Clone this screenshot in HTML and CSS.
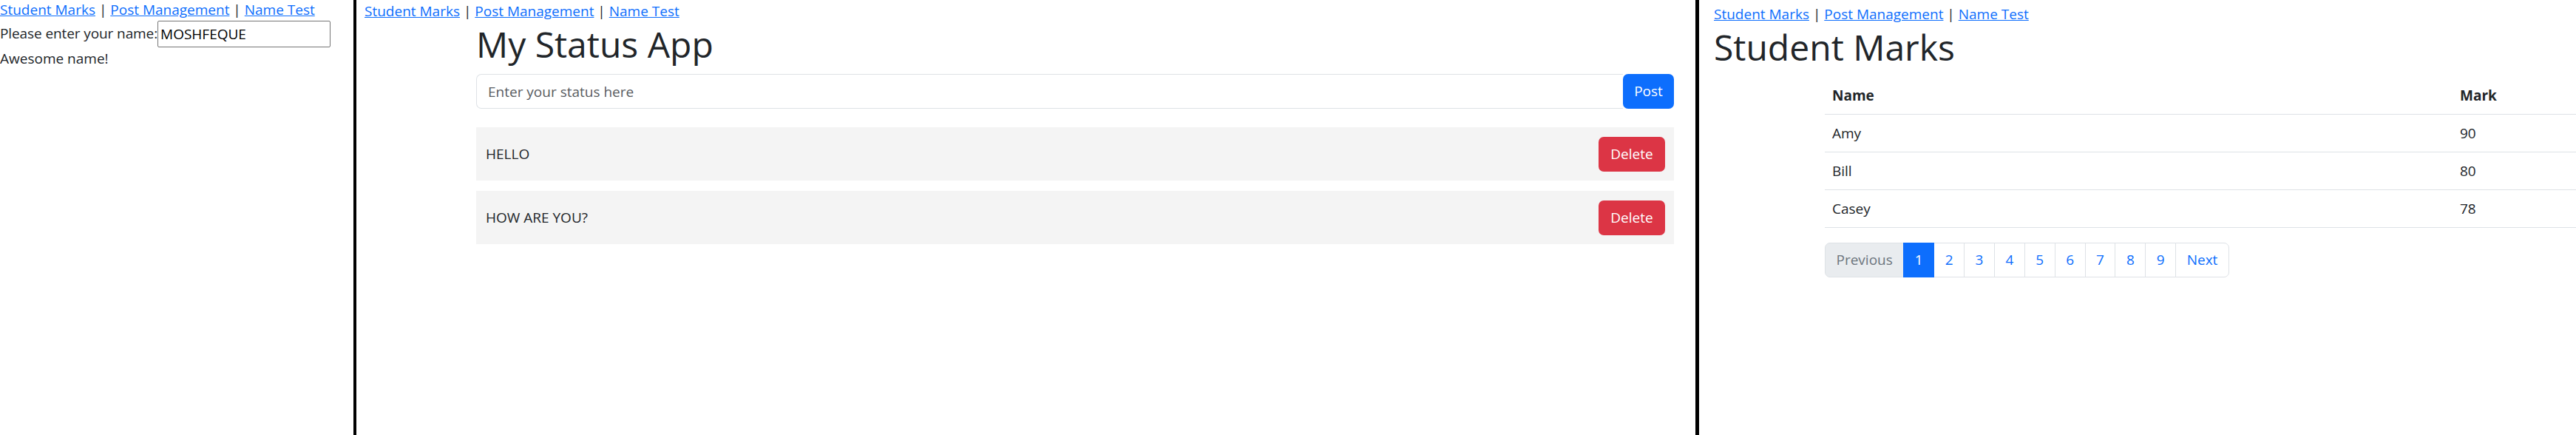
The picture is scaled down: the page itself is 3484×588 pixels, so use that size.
FILE: index.html
```html
<!DOCTYPE html>
<html lang="en">
<head>
<meta charset="utf-8">
<title>Apps</title>
<link rel="stylesheet" href="styles.css">
</head>
<body>
<div class="screen">
  <section class="panel panel-name">
    <div class="nav-line"><a href="#">Student Marks</a> | <a href="#">Post Management</a> | <a href="#">Name Test</a></div>
    <div class="name-row"><span>Please enter your name:</span><input class="name-input" type="text" value="MOSHFEQUE"></div>
    <div class="name-msg">Awesome name!</div>
  </section>
  <div class="divider divider-one"></div>
  <section class="panel panel-posts">
    <div class="nav-line nav-posts"><a href="#">Student Marks</a> | <a href="#">Post Management</a> | <a href="#">Name Test</a></div>
    <div class="container">
      <h1 class="title">My Status App</h1>
      <div class="input-group">
        <input class="status-input" type="text" placeholder="Enter your status here">
        <button class="btn btn-primary">Post</button>
      </div>
      <div class="post-list">
        <div class="post-item"><span>HELLO</span><button class="btn btn-danger">Delete</button></div>
        <div class="post-item"><span>HOW ARE YOU?</span><button class="btn btn-danger">Delete</button></div>
      </div>
    </div>
  </section>
  <div class="divider divider-two"></div>
  <section class="panel panel-marks">
    <div class="nav-line"><a href="#">Student Marks</a> | <a href="#">Post Management</a> | <a href="#">Name Test</a></div>
    <h1 class="title">Student Marks</h1>
    <div class="marks-body">
      <table class="marks-table">
        <thead>
          <tr><th class="col-name">Name</th><th>Mark</th></tr>
        </thead>
        <tbody>
          <tr><td>Amy</td><td>90</td></tr>
          <tr><td>Bill</td><td>80</td></tr>
          <tr><td>Casey</td><td>78</td></tr>
        </tbody>
      </table>
      <ul class="pagination">
        <li class="page-item disabled"><span class="page-link">Previous</span></li>
        <li class="page-item active"><span class="page-link">1</span></li>
        <li class="page-item"><a class="page-link" href="#">2</a></li>
        <li class="page-item"><a class="page-link" href="#">3</a></li>
        <li class="page-item"><a class="page-link" href="#">4</a></li>
        <li class="page-item"><a class="page-link" href="#">5</a></li>
        <li class="page-item"><a class="page-link" href="#">6</a></li>
        <li class="page-item"><a class="page-link" href="#">7</a></li>
        <li class="page-item"><a class="page-link" href="#">8</a></li>
        <li class="page-item"><a class="page-link" href="#">9</a></li>
        <li class="page-item"><a class="page-link" href="#">Next</a></li>
      </ul>
    </div>
  </section>
</div>
</body>
</html>
```
FILE: styles.css
```css
* { box-sizing: border-box; }

html, body {
  margin: 0;
  padding: 0;
  background: #ffffff;
}

body {
  font-family: "Open Sans", "Noto Sans", sans-serif;
  font-size: 19px;
  color: #212529;
}

.screen {
  display: flex;
  width: 3484px;
  height: 588px;
  overflow: hidden;
}

.panel {
  height: 588px;
  overflow: hidden;
  background: #ffffff;
  flex: none;
}

.divider {
  flex: none;
  height: 588px;
  background: #000000;
}
.divider-one { width: 4px; }
.divider-two { width: 5px; }

a {
  color: #0d6efd;
  text-decoration: underline;
}

/* Panel 1: name test */
.panel-name {
  width: 478px;
  color: #212529;
}
.panel-name .nav-line {
  line-height: 27px;
  height: 27px;
}
.name-row {
  display: flex;
  align-items: center;
  height: 37px;
  line-height: 27px;
  letter-spacing: -0.1px;
}
.name-input {
  width: 234px;
  height: 36px;
  border: 1px solid #767676;
  border-radius: 2px;
  padding: 0 3px;
  font-family: inherit;
  font-size: 19px;
  letter-spacing: 0;
  color: #000000;
  background: #ffffff;
}
.name-msg {
  margin-top: 2px;
  line-height: 27px;
}

/* Panel 2: posts */
.panel-posts {
  width: 1811px;
}
.nav-line {
  line-height: 30px;
  height: 30px;
  white-space: nowrap;
}
.nav-posts {
  padding-left: 11px;
}
.container {
  width: 1620px;
  margin-left: 162px;
}
.title {
  font-size: 48px;
  font-weight: 500;
  line-height: 60px;
  margin: 0 0 10px;
  color: #212529;
  white-space: nowrap;
}
.input-group {
  display: flex;
  height: 47px;
}
.status-input {
  flex: 1;
  height: 47px;
  border: 1px solid #dee2e6;
  border-right: none;
  border-radius: 7px 0 0 7px;
  padding: 0 15px;
  font-family: inherit;
  font-size: 19px;
  color: #212529;
  background: #ffffff;
}
.status-input::placeholder {
  color: #595c5f;
}
.btn {
  height: 47px;
  border: none;
  border-radius: 7px;
  padding: 0 15px;
  font-family: inherit;
  font-size: 19px;
  color: #ffffff;
  line-height: 47px;
}
.btn-primary {
  background: #0d6efd;
  width: 69px;
}
.btn-danger {
  background: #dc3545;
  width: 90px;
}
.post-list {
  margin-top: 25px;
  display: flex;
  flex-direction: column;
  gap: 14px;
}
.post-item {
  display: flex;
  align-items: center;
  justify-content: space-between;
  height: 72px;
  padding: 0 12px 0 13px;
  background: #f4f4f4;
}

/* Panel 3: marks */
.panel-marks {
  flex: 1;
  padding: 4px 0 0 20px;
}
.marks-body {
  margin-left: 150px;
}
.marks-table {
  width: 1700px;
  border-collapse: collapse;
  margin-bottom: 20px;
}
.marks-table th,
.marks-table td {
  text-align: left;
  padding: 10px;
  line-height: 30px;
  border-bottom: 1px solid #dee2e6;
}
.marks-table th {
  font-weight: 700;
}
.col-name {
  width: 849px;
}
.pagination {
  display: flex;
  list-style: none;
  margin: 0;
  padding: 0;
}
.page-link {
  display: block;
  padding: 0 14.5px;
  height: 47px;
  line-height: 45px;
  border: 1px solid #dee2e6;
  margin-left: -1px;
  color: #0d6efd;
  background: #ffffff;
  text-decoration: none;
}
.page-item:first-child .page-link {
  margin-left: 0;
  border-radius: 7px 0 0 7px;
}
.page-item:last-child .page-link {
  border-radius: 0 7px 7px 0;
}
.page-item.disabled .page-link {
  color: #6c757d;
  background: #e9ecef;
}
.page-item.active .page-link {
  color: #ffffff;
  background: #0d6efd;
  border-color: #0d6efd;
  position: relative;
}
```
